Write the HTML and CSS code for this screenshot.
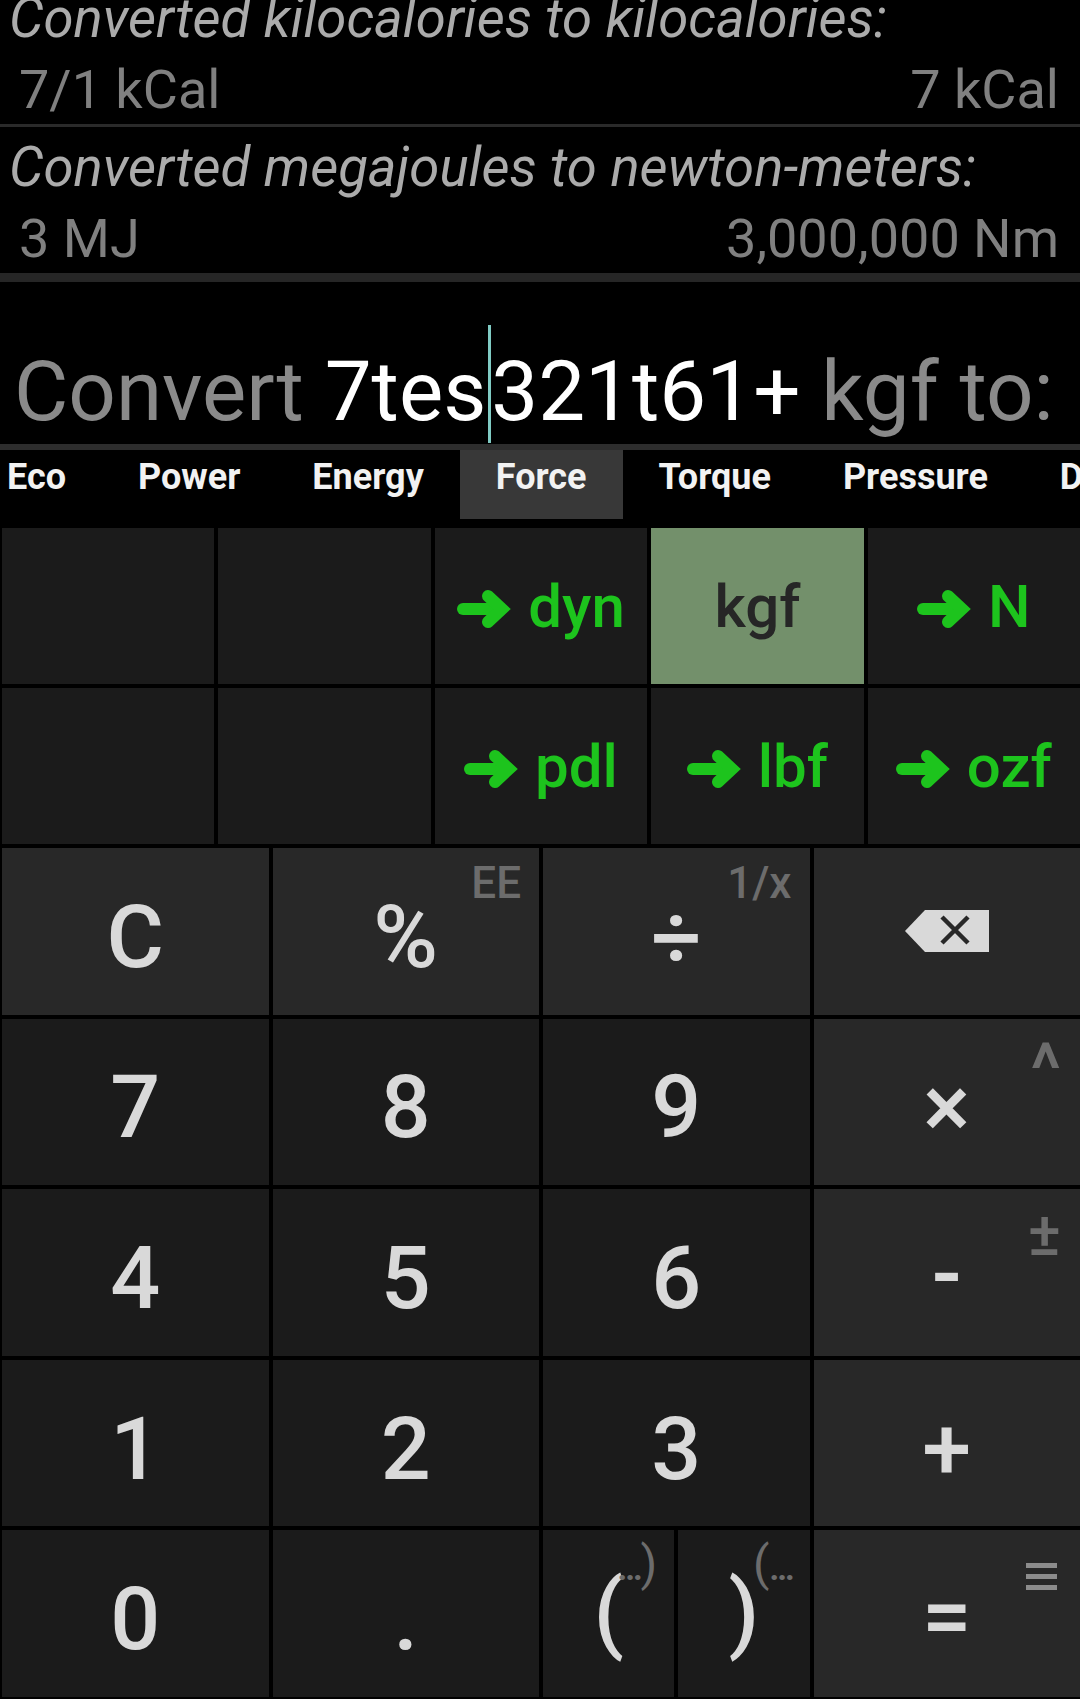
FILE: index.html
```html
<!DOCTYPE html>
<html lang="en">
<head>
<meta charset="utf-8">
<title>Unit converter calculator</title>
<link rel="stylesheet" href="styles.css">
</head>
<body>
<div class="app">
  <section class="history">
    <div class="hist-item sep">
      <div class="hist-title">Converted kilocalories to kilocalories:</div>
      <div class="hist-values"><span>7/1 kCal</span><span>7 kCal</span></div>
    </div>
    <div class="hist-item">
      <div class="hist-title">Converted megajoules to newton-meters:</div>
      <div class="hist-values"><span>3 MJ</span><span>3,000,000 Nm</span></div>
    </div>
  </section>

  <section class="input">
    <div class="input-line"><span class="dim">Convert </span><span class="val">7tes</span><span class="cursor"></span><span class="val">321t61+</span><span class="dim"> kgf to:</span></div>
  </section>

  <nav class="tabs">
    <div class="tabs-track">
      <span class="tab">Eco</span>
      <span class="tab">Power</span>
      <span class="tab">Energy</span>
      <span class="tab active">Force</span>
      <span class="tab">Torque</span>
      <span class="tab">Pressure</span>
      <span class="tab">Density</span>
    </div>
  </nav>

  <section class="units">
    <div class="unit"></div>
    <div class="unit"></div>
    <div class="unit"><svg class="arrow" viewBox="0 0 54 40"><path d="M6 20H40" /><path d="M31 7L45 20L31 33" /></svg><span>dyn</span></div>
    <div class="unit selected"><span>kgf</span></div>
    <div class="unit"><svg class="arrow" viewBox="0 0 54 40"><path d="M6 20H40" /><path d="M31 7L45 20L31 33" /></svg><span>N</span></div>
    <div class="unit"></div>
    <div class="unit"></div>
    <div class="unit"><svg class="arrow" viewBox="0 0 54 40"><path d="M6 20H40" /><path d="M31 7L45 20L31 33" /></svg><span>pdl</span></div>
    <div class="unit"><svg class="arrow" viewBox="0 0 54 40"><path d="M6 20H40" /><path d="M31 7L45 20L31 33" /></svg><span>lbf</span></div>
    <div class="unit"><svg class="arrow" viewBox="0 0 54 40"><path d="M6 20H40" /><path d="M31 7L45 20L31 33" /></svg><span>ozf</span></div>
  </section>

  <section class="keypad">
    <div class="key op">C</div>
    <div class="key op">%<span class="alt">EE</span></div>
    <div class="key op">÷<span class="alt">1/x</span></div>
    <div class="key op icon-key"><svg class="bksp" viewBox="0 0 84 42"><path class="bk-body" d="M20 0H84V42H20L0 21Z"/><path class="bk-x" d="M37 7L63 33M63 7L37 33"/></svg></div>

    <div class="key">7</div>
    <div class="key">8</div>
    <div class="key">9</div>
    <div class="key op">×<span class="alt caret">^</span></div>

    <div class="key">4</div>
    <div class="key">5</div>
    <div class="key">6</div>
    <div class="key op minus">-<span class="alt pm">±</span></div>

    <div class="key">1</div>
    <div class="key">2</div>
    <div class="key">3</div>
    <div class="key op">+</div>

    <div class="key">0</div>
    <div class="key">.</div>
    <div class="split">
      <div class="key paren">(<span class="alt paren-alt"><span class="dots">…</span>)</span></div>
      <div class="key paren">)<span class="alt paren-alt">(<span class="dots">…</span></span></div>
    </div>
    <div class="key op equals">=<svg class="menu" viewBox="0 0 31 27"><rect x="0" y="0" width="31" height="5"/><rect x="0" y="11" width="31" height="5"/><rect x="0" y="22" width="31" height="5"/></svg></div>
  </section>
</div>
</body>
</html>
```

FILE: styles.css
```css
* { box-sizing: border-box; }

html, body {
  margin: 0;
  padding: 0;
  background: #000;
}

body {
  width: 1080px;
  height: 1699px;
  overflow: hidden;
  font-family: Roboto, "Noto Sans", "Liberation Sans", sans-serif;
}

.app {
  display: flex;
  flex-direction: column;
  height: 1699px;
}

/* ---------- history ---------- */
.history {
  flex: none;
  height: 273px;
  display: flex;
  flex-direction: column;
  justify-content: flex-end;
  overflow: hidden;
}

.hist-item {
  flex: none;
  padding-top: 10px;
}

.hist-item.sep {
  border-bottom: 3px solid #2a2a2a;
}

.hist-title {
  font-style: italic;
  font-size: 54.5px;
  line-height: 60px;
  color: #ababab;
  padding-left: 9px;
  white-space: nowrap;
}

.hist-values {
  display: flex;
  justify-content: space-between;
  margin-top: 8px;
  font-size: 54px;
  line-height: 68px;
  color: #808080;
  padding: 0 21px 0 19px;
  white-space: nowrap;
}

/* ---------- input ---------- */
.input {
  flex: none;
  height: 177px;
  border-top: 9px solid #262626;
  border-bottom: 6px solid #2d2d2d;
  display: flex;
  align-items: flex-end;
  padding: 0 0 1px 14px;
  overflow: hidden;
  white-space: nowrap;
  font-size: 83.5px;
}

.input-line {
  line-height: 84px;
}

.dim { color: #8a8a8a; }
.val { color: #ffffff; }

.cursor {
  display: inline-block;
  width: 3px;
  height: 118px;
  background: #80cbc4;
  vertical-align: -23px;
  margin: 0 0 0 2px;
}

/* ---------- tabs ---------- */
.tabs {
  flex: none;
  height: 69px;
  margin-bottom: 9px;
  overflow: hidden;
}

.tabs-track {
  display: flex;
  margin-left: -29px;
}

.tab {
  flex: none;
  height: 69px;
  padding: 0 36px;
  font-size: 36px;
  font-weight: 700;
  line-height: 54px;
  color: #f2f2f2;
  white-space: nowrap;
}

.tab.active {
  background: #383838;
}

/* ---------- unit grid ---------- */
.units {
  flex: none;
  display: grid;
  grid-template-columns: repeat(5, 1fr);
  grid-auto-rows: 156px;
  gap: 4px;
  padding-left: 2px;
  margin-bottom: 4px;
}

.unit {
  background: #1b1b1b;
  display: flex;
  align-items: center;
  justify-content: center;
  gap: 17px;
  font-size: 60px;
  font-weight: 500;
  color: #1dc41d;
}

.unit.selected {
  background: #73906b;
  color: #262626;
}

.arrow {
  width: 54px;
  height: 40px;
  margin-top: 6px;
  fill: none;
  stroke: #1dc41d;
  stroke-width: 12;
  stroke-linecap: round;
  stroke-linejoin: miter;
  stroke-miterlimit: 4;
}

/* ---------- keypad ---------- */
.keypad {
  flex: 1;
  display: grid;
  grid-template-columns: repeat(4, 1fr);
  grid-template-rows: repeat(5, 1fr);
  gap: 4px;
  padding: 0 0 2px 2px;
}

.key {
  position: relative;
  background: #1b1b1b;
  display: flex;
  align-items: center;
  justify-content: center;
  padding-top: 10px;
  font-size: 88px;
  font-weight: 500;
  color: #d9d9d9;
}

.key.op {
  background: #282828;
}

.key.icon-key,
.key.minus {
  padding-top: 0;
}

.key.equals {
  padding-top: 4px;
}

.key.paren {
  padding-top: 0;
  padding-bottom: 4px;
}

.split {
  display: grid;
  grid-template-columns: 1fr 1fr;
  gap: 4px;
}

.alt {
  position: absolute;
  top: 13px;
  right: 18px;
  font-size: 44px;
  line-height: 44px;
  font-weight: 500;
  color: #6c6c6c;
}

.alt.caret {
  top: 15px;
  right: 19px;
  font-size: 72px;
  line-height: 72px;
}

.alt.pm {
  top: 14px;
  right: 19px;
  font-size: 62px;
  line-height: 62px;
}

.alt.paren-alt {
  top: 10px;
  right: 17px;
  font-size: 48px;
  line-height: 48px;
  font-weight: 400;
}

.dots {
  font-size: 34px;
  font-weight: 700;
  letter-spacing: -2px;
}

.bksp {
  width: 84px;
  height: 42px;
}

.bk-body { fill: #d9d9d9; }

.bk-x {
  fill: none;
  stroke: #282828;
  stroke-width: 4.5;
}

.menu {
  position: absolute;
  top: 33px;
  right: 23px;
  width: 31px;
  height: 27px;
  fill: #8c8c8c;
}
```
